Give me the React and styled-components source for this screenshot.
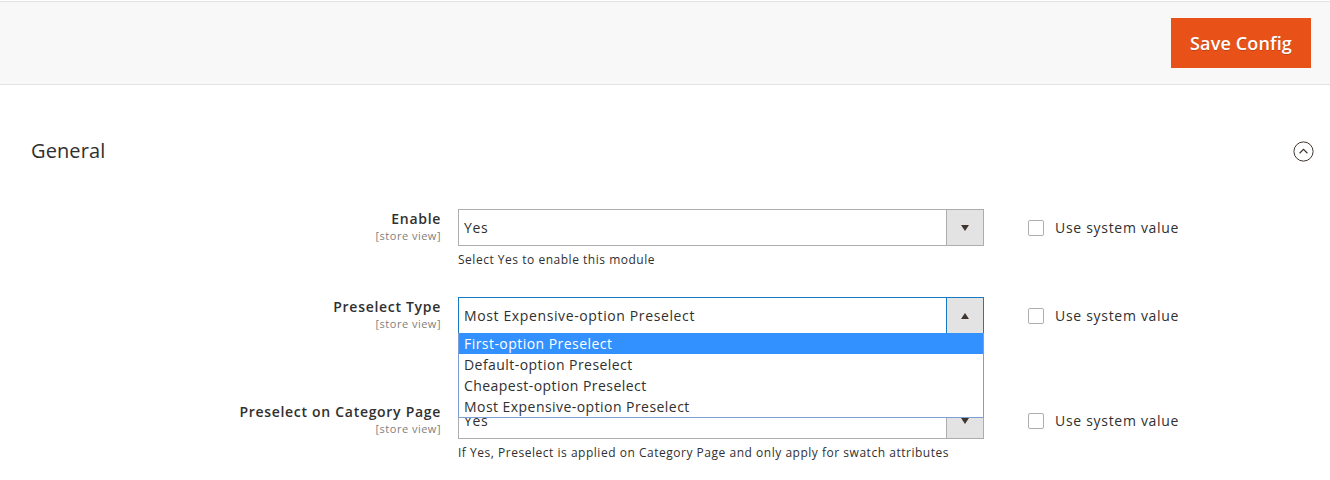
import React from "react";
import styled, { createGlobalStyle } from "styled-components";

const GlobalStyle = createGlobalStyle`
  html, body {
    margin: 0;
    padding: 0;
    background: #fff;
  }
  body {
    font-family: "Open Sans", "Liberation Sans", sans-serif;
    color: #303030;
  }
`;

const fields = [
  {
    id: "enable",
    label: "Enable",
    value: "Yes",
    comment: "Select Yes to enable this module",
    spacing: 29,
  },
  {
    id: "type",
    label: "Preselect Type",
    value: "Most Expensive-option Preselect",
    open: true,
    options: [
      "First-option Preselect",
      "Default-option Preselect",
      "Cheapest-option Preselect",
      "Most Expensive-option Preselect",
    ],
    spacing: 68,
  },
  {
    id: "category",
    label: "Preselect on Category Page",
    value: "Yes",
    comment:
      "If Yes, Preselect is applied on Category Page and only apply for swatch attributes",
    spacing: 20,
  },
];

export default function App() {
  return (
    <>
      <GlobalStyle />
      <PageActions>
        <SaveButton type="button">Save Config</SaveButton>
      </PageActions>
      <Section>
        <SectionHeader>
          <SectionTitle>General</SectionTitle>
          <CollapseIcon width="21" height="21" viewBox="0 0 21 21">
            <circle cx="10.5" cy="10.5" r="9.6" fill="none" stroke="#41362f" strokeWidth="1" />
            <path d="M6.6 12.2 L10.5 8.4 L14.4 12.2" fill="none" stroke="#41362f" strokeWidth="1.2" />
          </CollapseIcon>
        </SectionHeader>
        <Fieldset>
          {fields.map((field) => (
            <Row key={field.id} $spacing={field.spacing}>
              <LabelCell>
                <LabelText>{field.label}</LabelText>
                <Scope>[store view]</Scope>
              </LabelCell>
              <ValueCell>
                <SelectBox $focused={field.open}>
                  <SelectValue>{field.value}</SelectValue>
                  <ArrowBox $focused={field.open}>
                    <Arrow $up={field.open} />
                  </ArrowBox>
                  {field.open && (
                    <OptionList>
                      {field.options.map((option, i) => (
                        <Option key={option} $active={i === 0}>
                          {option}
                        </Option>
                      ))}
                    </OptionList>
                  )}
                </SelectBox>
                {field.comment && <Comment>{field.comment}</Comment>}
              </ValueCell>
              <SystemCell>
                <Checkbox />
                <SystemLabel>Use system value</SystemLabel>
              </SystemCell>
            </Row>
          ))}
        </Fieldset>
      </Section>
    </>
  );
}

const PageActions = styled.div`
  display: flex;
  justify-content: flex-end;
  align-items: center;
  margin-top: 1px;
  height: 82px;
  padding: 0 19px 0 0;
  background: #f8f8f8;
  border-top: 1px solid #e3e3e3;
  border-bottom: 1px solid #e3e3e3;
`;

const SaveButton = styled.button`
  width: 140px;
  height: 50px;
  padding: 0;
  border: none;
  border-radius: 0;
  background: #e85219;
  color: #fff;
  font-family: "Open Sans", "Liberation Sans", sans-serif;
  font-size: 18px;
  font-weight: 600;
  letter-spacing: 0.15px;
  cursor: pointer;
  text-shadow: 0 1px 0 rgba(0, 0, 0, 0.2);
`;

const Section = styled.div`
  padding: 0 17px 0 31px;
`;

const SectionHeader = styled.div`
  display: flex;
  justify-content: space-between;
  align-items: center;
  height: 56px;
  margin-top: 37px;
  margin-bottom: 31px;
`;

const SectionTitle = styled.h2`
  margin: 0;
  font-size: 20px;
  font-weight: 400;
  color: #303030;
  letter-spacing: 0.1px;
`;

const CollapseIcon = styled.svg`
  display: block;
  margin-right: -1px;
  margin-top: 2px;
`;

const Fieldset = styled.div`
  display: flex;
  flex-direction: column;
`;

const Row = styled.div`
  display: grid;
  grid-template-columns: 410px 526px auto;
  column-gap: 17px;
  align-items: start;
  padding-bottom: ${(p) => p.$spacing}px;
`;

const LabelCell = styled.div`
  display: flex;
  flex-direction: column;
  align-items: flex-end;
  text-align: right;
`;

const LabelText = styled.span`
  font-size: 14px;
  line-height: 19px;
  font-weight: 600;
  letter-spacing: 0.7px;
  color: #303030;
`;

const Scope = styled.span`
  font-size: 11px;
  line-height: 16px;
  letter-spacing: 0.5px;
  color: #808080;
`;

const ValueCell = styled.div`
  display: flex;
  flex-direction: column;
`;

const SelectBox = styled.div`
  position: relative;
  display: flex;
  align-items: center;
  height: 37px;
  box-sizing: border-box;
  border: 1px solid ${(p) => (p.$focused ? "#1979c3" : "#adadad")};
  background: #fff;
`;

const SelectValue = styled.span`
  flex: 1;
  padding-left: 5px;
  font-size: 14px;
  letter-spacing: 0.62px;
  color: #303030;
  white-space: nowrap;
`;

const ArrowBox = styled.span`
  display: flex;
  align-items: center;
  justify-content: center;
  align-self: stretch;
  width: 36px;
  background: #e3e3e3;
  border-left: 1px solid ${(p) => (p.$focused ? "#1979c3" : "#adadad")};
`;

const Arrow = styled.span`
  width: 0;
  height: 0;
  border-left: 4px solid transparent;
  border-right: 4px solid transparent;
  ${(p) =>
    p.$up
      ? "border-bottom: 6px solid #41362f;"
      : "border-top: 6px solid #41362f;"}
`;

const OptionList = styled.ul`
  position: absolute;
  z-index: 10;
  top: 100%;
  left: -1px;
  right: -1px;
  margin: 0;
  padding: 0;
  list-style: none;
  background: #fff;
  border: 1px solid #7f9ed6;
  border-top: none;
`;

const Option = styled.li`
  height: 21px;
  line-height: 21px;
  padding-left: 5px;
  font-size: 14px;
  letter-spacing: 0.45px;
  color: ${(p) => (p.$active ? "#fff" : "#303030")};
  background: ${(p) => (p.$active ? "#3390ff" : "transparent")};
  white-space: nowrap;
`;

const Comment = styled.div`
  margin-top: 5px;
  font-size: 12px;
  line-height: 17px;
  letter-spacing: 0.52px;
  color: #303030;
`;

const SystemCell = styled.label`
  display: flex;
  align-items: center;
  height: 37px;
  margin-left: 27px;
`;

const Checkbox = styled.span`
  width: 16px;
  height: 16px;
  box-sizing: border-box;
  border: 1px solid #adadad;
  border-radius: 2px;
  background: #fff;
`;

const SystemLabel = styled.span`
  margin-left: 11px;
  font-size: 14px;
  letter-spacing: 0.7px;
  color: #303030;
`;
